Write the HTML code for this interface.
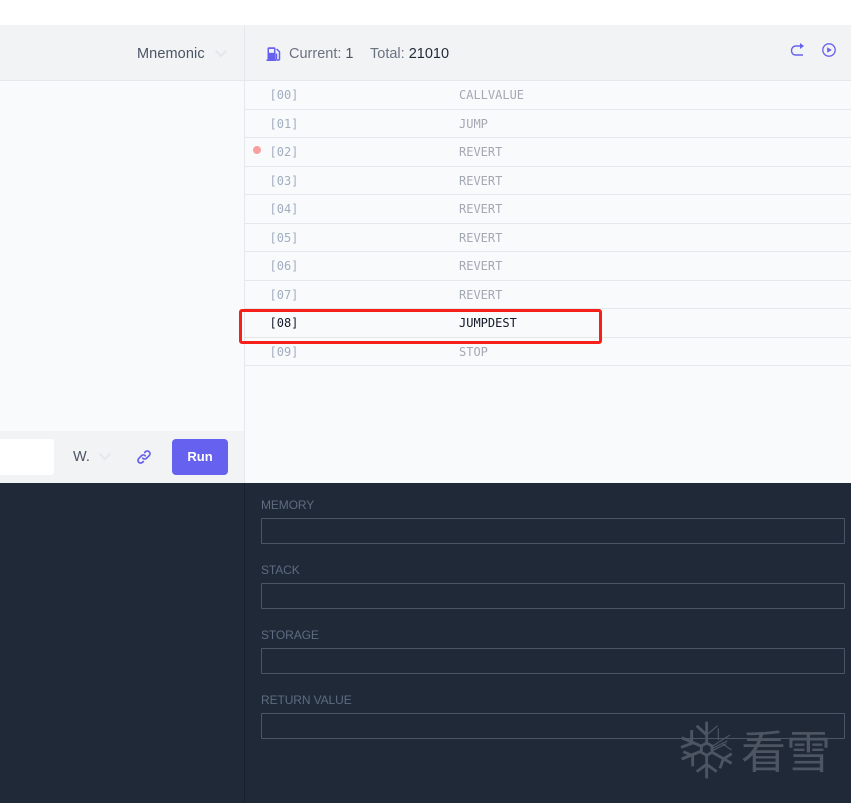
<!DOCTYPE html>
<html>
<head>
<meta charset="utf-8">
<style>
html,body{margin:0;padding:0;background:#fff;}
body{width:851px;height:803px;position:relative;overflow:hidden;font-family:"Liberation Sans",sans-serif;}
.a{position:absolute;}
.row{position:absolute;left:245px;width:606px;height:28px;border-bottom:1px solid #e5e7eb;box-sizing:content-box;font:12px/28px "DejaVu Sans Mono",monospace;color:#a0aec0;}
.row .n{position:absolute;left:24.5px;top:0;}
.row .o{position:absolute;left:214px;top:0;color:#a3a8b5;}
.lbl{position:absolute;left:261px;font-size:12px;line-height:16px;color:#5f6b80;letter-spacing:-.1px;}
.box{position:absolute;left:261px;width:584px;height:26px;box-sizing:border-box;border:1px solid #4a5568;border-radius:1px;}
</style>
</head>
<body>
<div class="a" style="left:0;top:25px;width:851px;height:56px;background:#f2f3f5;border-bottom:1px solid #e5e7eb;box-sizing:border-box;"></div>
<div class="a" style="left:0;top:81px;width:244px;height:350px;background:#f9fafb;"></div>
<div class="a" style="left:245px;top:81px;width:606px;height:402px;background:#f9fafb;"></div>
<div class="a" style="left:244px;top:25px;width:1px;height:458px;background:#e5e7eb;"></div>
<div class="a" style="left:0;top:431px;width:244px;height:52px;background:#f2f3f5;"></div>
<div class="a" style="left:0;top:483px;width:851px;height:320px;background:#1f2937;"></div>
<div class="a" style="left:244px;top:483px;width:1px;height:320px;background:#18202b;"></div>

<div class="a" style="left:137px;top:46px;font-size:14.5px;line-height:17px;color:#4b5563;letter-spacing:.1px;">Mnemonic</div>
<svg class="a" style="left:214px;top:47px;" width="14" height="14" viewBox="0 0 14 14"><path d="M1.500 3.500l5.500 5.500 5.500-5.500" fill="none" stroke="#e5e7eb" stroke-width="2"/></svg>

<svg class="a" style="left:266px;top:46px;" width="15" height="15" viewBox="0 0 15 15"><path d="M1.500 13.500V2.500C1.500 1.700 2 1.200 2.800 1.200h5.400c.8 0 1.300.5 1.300 1.300v11h.5V15H.5v-1.500z" fill="#6761ef"/><rect x="3" y="3" width="5" height="3.800" fill="#f2f3f5"/><path d="M10.500 3l3 2.800v7.200c0 1.500-3 1.500-3 0V7.500" fill="none" stroke="#6761ef" stroke-width="1.500"/></svg>
<div class="a" style="left:289px;top:46px;font-size:14.500px;line-height:17px;color:#6b7280;">Current: <span style="color:#4b5563">1</span></div>
<div class="a" style="left:370px;top:46px;font-size:14.500px;line-height:17px;color:#6b7280;">Total: <span style="color:#1f2937">21010</span></div>

<svg class="a" style="left:789px;top:41px;" width="16" height="16" viewBox="0 0 16 16"><path d="M14 14H7C3.800 14 2.500 11.800 2.500 9.500S4.200 5 7 5H12" fill="none" stroke="#6761ef" stroke-width="1.400"/><path d="M11 2l4 3-4 3z" fill="#6761ef"/></svg>
<svg class="a" style="left:821px;top:42px;" width="16" height="16" viewBox="0 0 16 16"><circle cx="8" cy="8" r="6.200" fill="none" stroke="#6761ef" stroke-width="1.300"/><path d="M6.200 5.200L10.800 8l-4.600 2.800z" fill="#6761ef"/></svg>

<div class="row" style="top:81px;"><span class="n">[00]</span><span class="o">CALLVALUE</span></div>
<div class="row" style="top:110px;height:27px;"><span class="n">[01]</span><span class="o">JUMP</span></div>
<div class="row" style="top:138px;"><span class="n">[02]</span><span class="o">REVERT</span></div>
<div class="row" style="top:167px;height:27px;"><span class="n">[03]</span><span class="o">REVERT</span></div>
<div class="row" style="top:195px;"><span class="n">[04]</span><span class="o">REVERT</span></div>
<div class="row" style="top:224px;height:27px;"><span class="n">[05]</span><span class="o">REVERT</span></div>
<div class="row" style="top:252px;"><span class="n">[06]</span><span class="o">REVERT</span></div>
<div class="row" style="top:281px;height:27px;"><span class="n">[07]</span><span class="o">REVERT</span></div>
<div class="row" style="top:309px;color:#111827;"><span class="n">[08]</span><span class="o" style="color:#111827;">JUMPDEST</span></div>
<div class="row" style="top:338px;height:27px;"><span class="n">[09]</span><span class="o">STOP</span></div>
<div class="a" style="left:253px;top:146px;width:8px;height:8px;border-radius:50%;background:#f8a0a0;"></div>
<div class="a" style="left:239px;top:309px;width:363px;height:35px;box-sizing:border-box;border:3px solid #f5201a;border-radius:3px;"></div>

<div class="a" style="left:0;top:439px;width:54px;height:36px;background:#fff;border-radius:0 3px 3px 0;"></div>
<div class="a" style="left:73px;top:449px;font-size:14.500px;line-height:17px;color:#4b5563;">W.</div>
<svg class="a" style="left:98px;top:450px;" width="14" height="14" viewBox="0 0 14 14"><path d="M1.500 3.500l5.500 5.500 5.500-5.500" fill="none" stroke="#e5e7eb" stroke-width="2"/></svg>
<svg class="a" style="left:136px;top:449px;" width="16" height="16" viewBox="0 0 24 24"><path d="M13.828 10.172a4 4 0 00-5.656 0l-4 4a4 4 0 105.656 5.656l1.102-1.101m-.758-4.899a4 4 0 005.656 0l4-4a4 4 0 00-5.656-5.656l-1.100 1.100" fill="none" stroke="#6761ef" stroke-width="2.600" stroke-linecap="round" stroke-linejoin="round"/></svg>
<div class="a" style="left:172px;top:439px;width:56px;height:36px;background:#6761ef;border-radius:4px;color:#fff;font-size:13px;font-weight:bold;line-height:35px;text-align:center;">Run</div>

<div class="lbl" style="top:497px;">MEMORY</div><div class="box" style="top:518px;"></div>
<div class="lbl" style="top:562px;">STACK</div><div class="box" style="top:583px;"></div>
<div class="lbl" style="top:627px;">STORAGE</div><div class="box" style="top:648px;"></div>
<div class="lbl" style="top:692px;">RETURN VALUE</div><div class="box" style="top:713px;"></div>

<svg class="a" style="left:675px;top:715px;" width="65" height="70" viewBox="0 0 195 210">
<g fill="none" stroke="#4d5563" stroke-width="8.500">
<path d="M95 20V84M65 32l30 28"/>
<path d="M95 120V190M65 170l30-22 30 22"/>
<path d="M20 68l60 26M50 45v38M18 97l38-14"/>
<path d="M20 132l60-24M25 110l28 12v32"/>
<path d="M112 112l58 33M135 160l10-28 25-16"/>
<path d="M95 84l16 9v19l-16 9-16-9V93z"/>
</g>
<g fill="none" stroke="#4d5563" stroke-width="3.500">
<path d="M95 60l33-28M130 40v35M110 95l55-35M112 100l45-22M114 106l40-20M140 85l30 20"/>
</g>
</svg>
<div class="a" style="left:741px;top:722px;font-family:'Noto Sans CJK SC',sans-serif;font-size:45px;line-height:54px;color:#4d5563;white-space:nowrap;letter-spacing:0;">看雪</div>
</body>
</html>
